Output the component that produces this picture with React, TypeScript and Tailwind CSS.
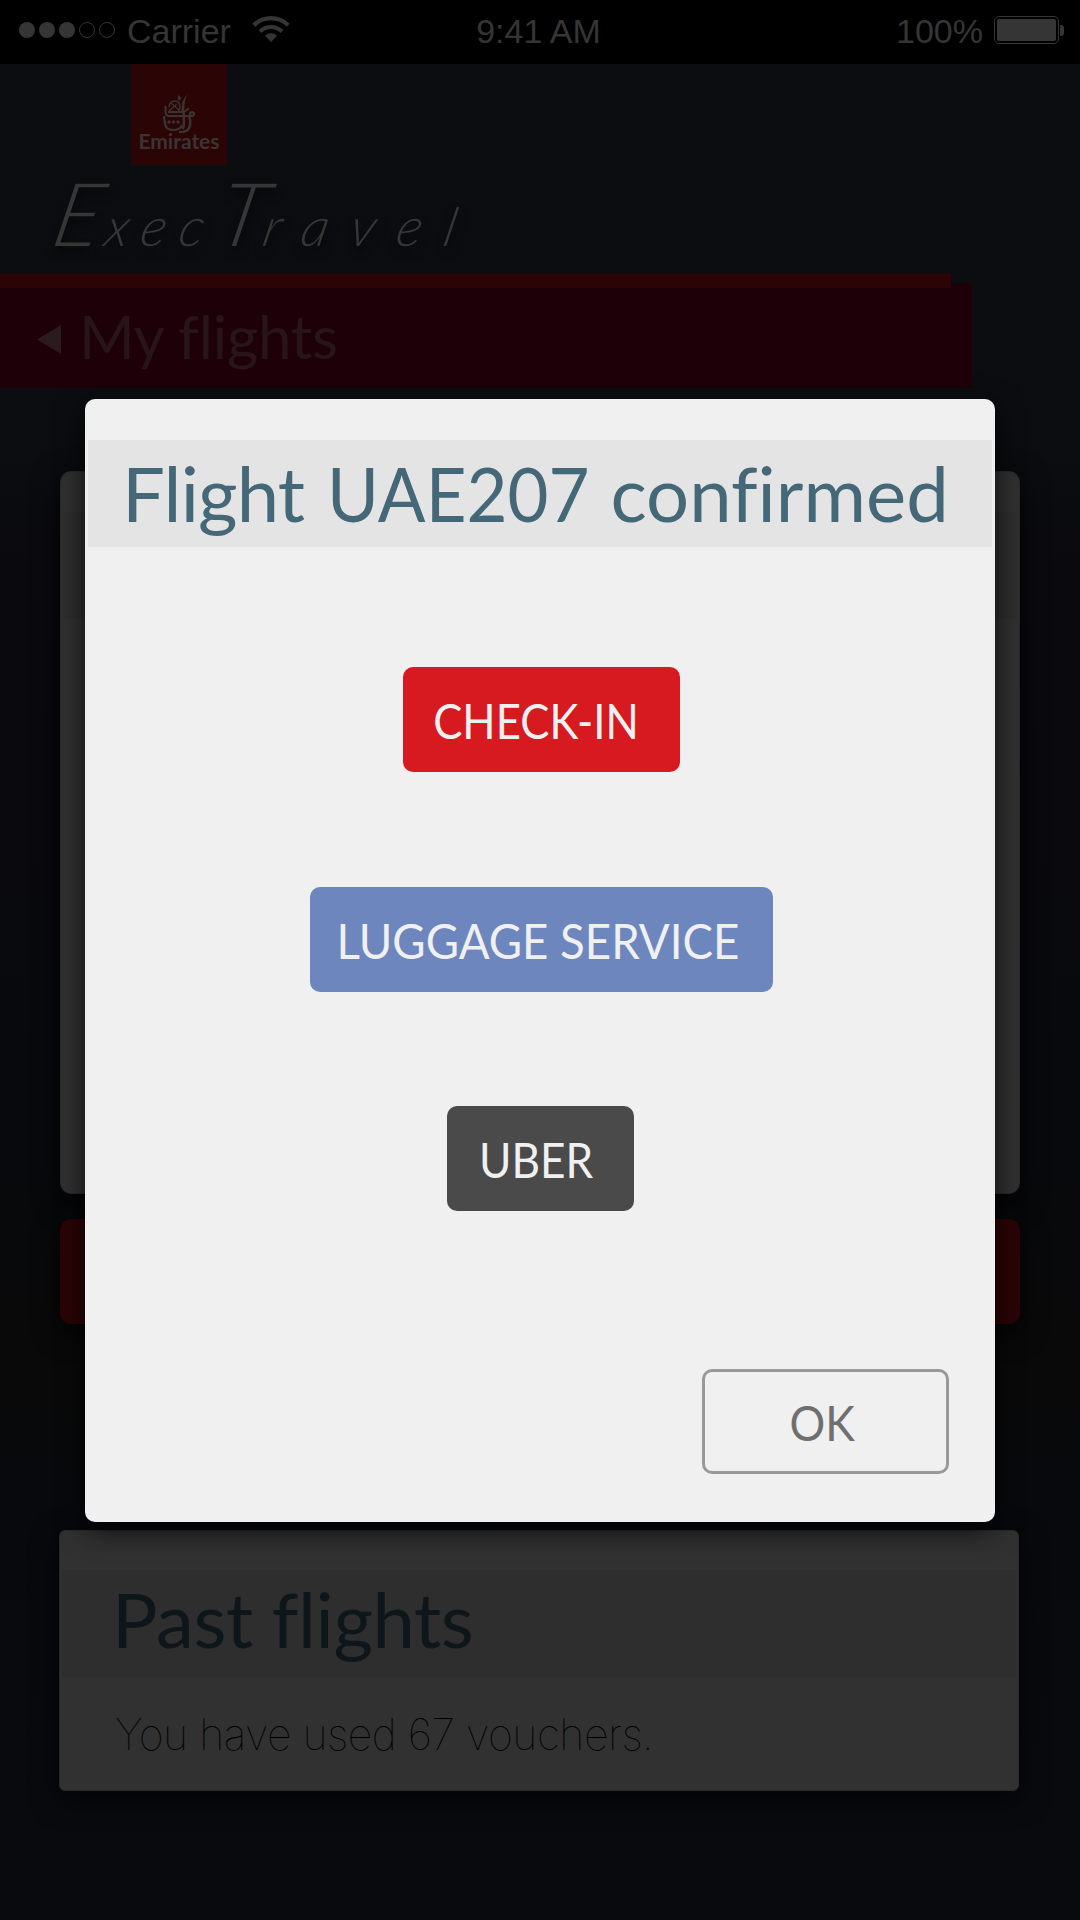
import type { ReactNode } from 'react';

const SANS = "font-['Liberation_Sans',Arial,sans-serif]";
const CARD_SHADOW = 'shadow-[0_8px_28px_rgba(0,0,0,0.7)]';

function SignalDots() {
  return (
    <div className="flex gap-1">
      <span className="size-4 rounded-full bg-[#353535]" />
      <span className="size-4 rounded-full bg-[#353535]" />
      <span className="size-4 rounded-full bg-[#353535]" />
      <span className="size-4 rounded-full border border-[#353535]" />
      <span className="size-4 rounded-full border border-[#353535]" />
    </div>
  );
}

function WifiIcon() {
  return (
    <svg width="38" height="27" viewBox="0 0 38 27" fill="none" stroke="#353535">
      <path d="M1.8 9.2a24.4 24.4 0 0 1 34.4 0" strokeWidth="4.2" />
      <path d="M8 15.5a15.6 15.6 0 0 1 22 0" strokeWidth="4" />
      <path d="M19 26l-6-6.2a8.5 8.5 0 0 1 12 0z" fill="#353535" stroke="none" />
    </svg>
  );
}

function Battery() {
  return (
    <div className="flex items-center gap-px">
      <div className="h-7 w-[65px] rounded-[5px] border border-[#353535] p-[2px]">
        <div className="h-full rounded-[2px] bg-[#353535]" />
      </div>
      <span className="h-[11px] w-1 rounded-r-[3px] bg-[#353535]" />
    </div>
  );
}

function StatusBar() {
  return (
    <div className={`grid h-16 grid-cols-[1fr_auto_1fr] items-center bg-black pr-4 pb-1 pl-[19px] text-[34px] leading-none text-[#353535] ${SANS}`}>
      <div className="flex items-center">
        <SignalDots />
        <span className="ml-3 pt-0.5">Carrier</span>
        <span className="ml-[21px] -mt-0.5"><WifiIcon /></span>
      </div>
      <span className="pt-0.5 pr-1.5">9:41 AM</span>
      <div className="flex items-center justify-end gap-[11px]">
        <span className="pt-0.5">100%</span>
        <Battery />
      </div>
    </div>
  );
}

function EmiratesLogo() {
  return (
    <div className="ml-[131px] flex h-[101px] w-24 flex-col items-center bg-[#2b0406] pt-[30px] text-[#3b3433]">
      <svg width="33" height="41" viewBox="0 0 33 41" fill="none" stroke="currentColor">
        <path d="M25 0c-4 4-6 7-6 12l-1 6 3-1c1-6 0-12 4-17z" fill="currentColor" stroke="none" />
        <path d="M15.500 1l3 3-2.500 3-1.500-3z" fill="currentColor" stroke="none" />
        <path d="M6 13c0-4 3-6 6-6 3.500 0 5 3 5 6 0 2-1 4-2 5" strokeWidth="1.500" />
        <path d="M7 8l9 8M14 10l-8 7" strokeWidth="1.200" />
        <path d="M5 18h15c3-1 4-3 6-3" strokeWidth="2" />
        <path d="M2.500 12v6c0 3 1 4 4 4h19" strokeWidth="2" />
        <path d="M21 17c-1 6 1 12-1 18" strokeWidth="2.400" />
        <circle cx="29" cy="20" r="2" strokeWidth="2.200" />
        <path d="M1 22c1 9 1 14 9 14 5 0 8-2 9-5" strokeWidth="2.200" />
        <path d="M4 28l2-2 2 2-2 2zM8.500 28l2-2 2 2-2 2zM13 28l2-2 2 2-2 2z" fill="currentColor" stroke="none" />
        <path d="M26 21c3 10 1 18-10 17" strokeWidth="2.400" />
      </svg>
      <span className="-mt-1 font-['Lato',sans-serif] text-[21px] leading-5 font-bold">Emirates</span>
    </div>
  );
}

function Wordmark() {
  return (
    <div className="h-[108px] origin-[0_77px] -skew-x-12 pl-[50px] font-['Lato',sans-serif] text-[54px] leading-[94px] font-light whitespace-nowrap text-[#363636] italic [text-shadow:2px_6px_8px_rgba(0,0,0,0.6)]">
      <span className="mr-1.5 text-[88px]">E</span><span className="tracking-[13px]">xec</span><span className="text-[88px]">T</span><span className="tracking-[22px]">ravel</span>
    </div>
  );
}

function Header() {
  return (
    <header>
      <StatusBar />
      <EmiratesLogo />
      <Wordmark />
      <div className="relative h-[15px] w-[951px] bg-[#2b0505]" />
      <div className="-mt-[5px] flex h-[105px] w-[972px] items-center bg-[#1e0009] pl-[37px] font-['Lato',sans-serif] text-[60px] leading-none tracking-[-0.250px] text-[#271519]">
        <svg className="mt-2 mr-[18px]" width="24" height="29" viewBox="0 0 24 29">
          <path d="M0 14.500L24 0v29z" fill="#2b1a1e" />
        </svg>
        My flights
      </div>
    </header>
  );
}

function FlightCard() {
  return (
    <section className={`mx-[60px] mt-[83px] h-[723px] rounded-[11px] border border-[#292929] bg-[#313131] pt-10 ${CARD_SHADOW}`}>
      <div className="mx-0.5 h-[107px] bg-[#2e2e2e]" />
    </section>
  );
}

function PastFlights() {
  return (
    <section className={`mt-[206px] mr-[61px] ml-[59px] h-[261px] rounded-md border border-[#292929] bg-[#313131] pt-[39px] ${CARD_SHADOW}`}>
      <h2 className="mx-0.5 h-[107px] bg-[#2e2e2e] pl-[50px] font-['Lato',sans-serif] text-[76px] leading-[98px] tracking-[-0.4px] text-[#0d161a]">Past flights</h2>
      <p className="pt-[27px] pl-[55px] font-['Inter',sans-serif] text-[43px] leading-[60px] font-thin tracking-[-0.550px] text-black">You have used 67 vouchers.</p>
    </section>
  );
}

function Button({ className, textClass, children }: { className: string; textClass: string; children: ReactNode }) {
  return (
    <button className={`flex h-[105px] items-center justify-center rounded-[10px] pt-0.5 text-[48px] leading-none whitespace-nowrap ${className}`}>
      <span className={textClass}>{children}</span>
    </button>
  );
}

function ConfirmDialog() {
  return (
    <div role="dialog" className="absolute inset-x-[85px] top-[399px] flex h-[1123px] flex-col items-center rounded-[10px] bg-[#f0f0f0] pt-[41px] font-['Lato',sans-serif] shadow-[0_8px_28px_rgba(0,0,0,0.75)]">
      <h1 className="h-[107px] w-[904px] bg-[#e4e4e4] pl-[34px] text-[76px] leading-[105px] whitespace-nowrap text-[#456879] [word-spacing:3px] [font-variant-ligatures:none]">
        <span className="tracking-[-0.8px]">Flight</span> <span className="-mr-[21px] inline-block origin-left scale-x-93">UAE207</span> confirmed
      </h1>
      <div className="mt-[120px] ml-0.5 flex flex-col items-center text-[#f0f0f0]">
        <Button className="w-[277px] bg-[#d71920] pr-[9px]" textClass="scale-x-91">CHECK-IN</Button>
        <Button className="mt-[115px] w-[463px] bg-[#6d86be] pr-1.5" textClass="scale-x-95">LUGGAGE SERVICE</Button>
        <Button className="mt-[114px] mr-0.5 w-[187px] bg-[#4a4a4a] pr-[7px]" textClass="scale-x-92">UBER</Button>
      </div>
      <Button className="mt-[158px] mr-[46px] w-[247px] self-end border-[3px] border-[#999999] pr-1.5 text-[#6f6f6f]" textClass="scale-x-93">OK</Button>
    </div>
  );
}

export default function App() {
  return (
    <main className="relative h-[1920px] w-[1080px] overflow-hidden bg-[linear-gradient(#0b0d10_0%,#0b0d10_22%,#0a090e_32%,#08090d_55%,#090909_72%,#07090d_80%,#090a0e_100%)]">
      <Header />
      <FlightCard />
      <div className={`mx-[60px] mt-[25px] h-[105px] rounded-[11px] bg-[#2b0406] ${CARD_SHADOW}`} />
      <PastFlights />
      <ConfirmDialog />
    </main>
  );
}
